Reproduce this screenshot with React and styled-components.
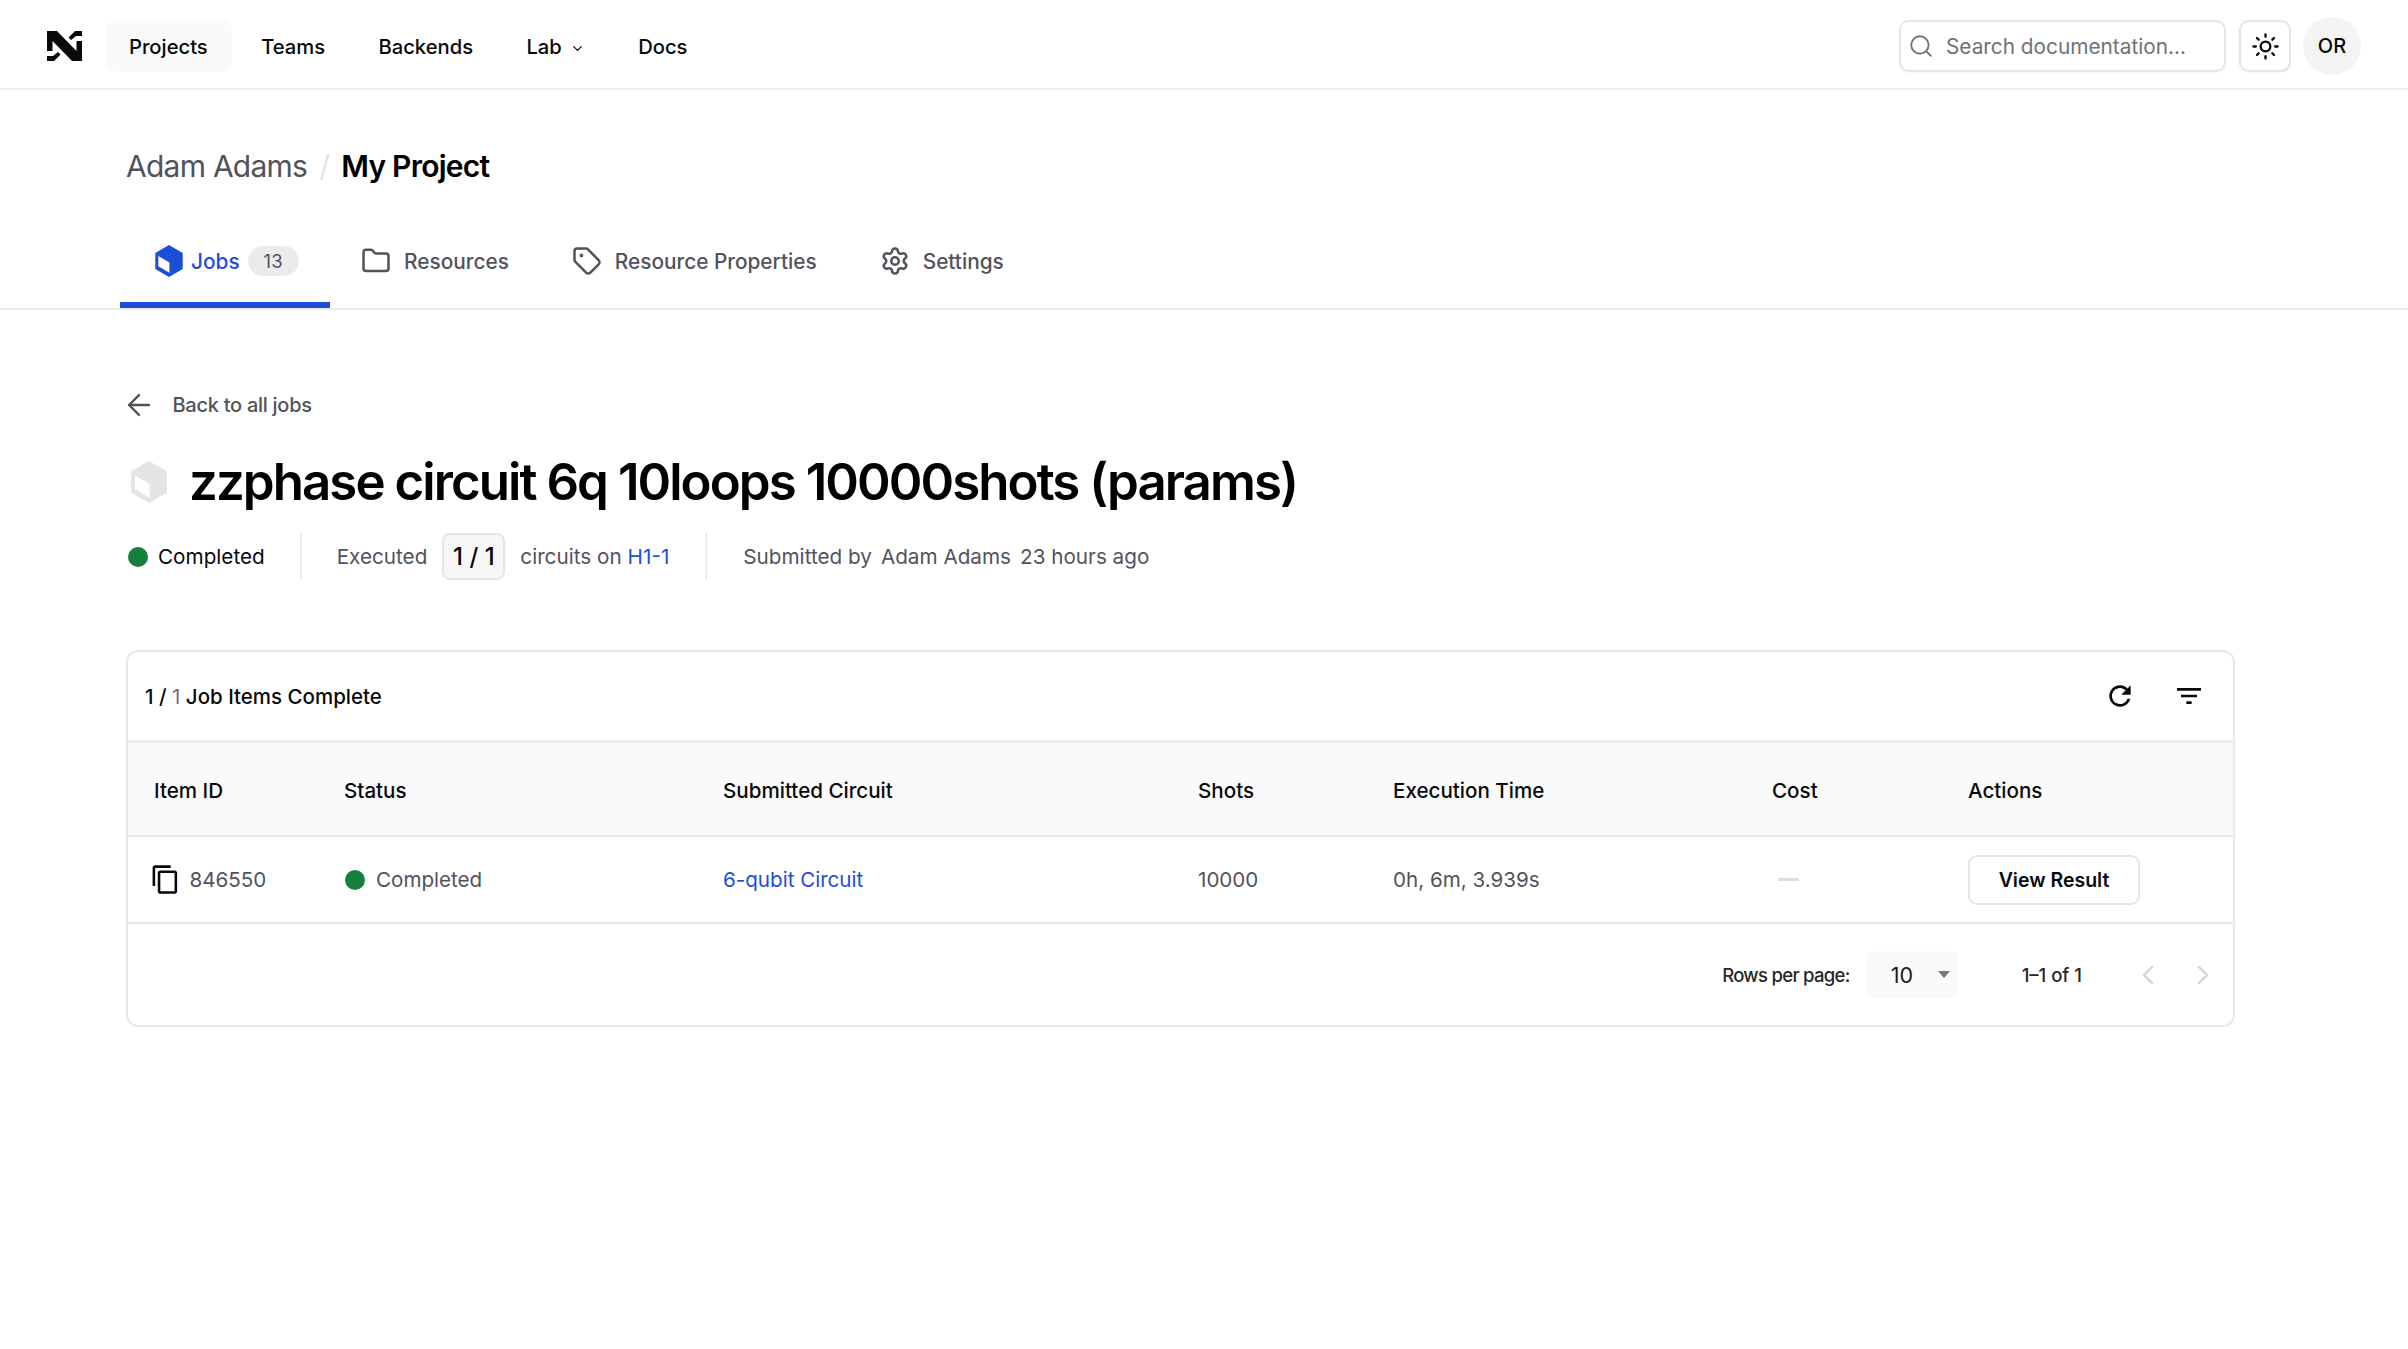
import React from "react";
import styled, { createGlobalStyle } from "styled-components";
import { Search, Sun, ChevronDown, ChevronLeft, ChevronRight, Folder, Tag, Settings, ArrowLeft } from "lucide-react";

const Global = createGlobalStyle`
  html, body { margin: 0; padding: 0; background: #fff; }
  body { font-family: Inter, "Noto Sans", sans-serif; color: #09090b; font-size: 20.7px; -webkit-font-smoothing: antialiased; }
  * { box-sizing: border-box; }
`;

const Page = styled.div`
  width: 2408px;
  min-height: 1349px;
  background: #fff;
`;
const TopBar = styled.header`
  height: 90px;
  display: flex;
  align-items: center;
  padding: 4px 47px 0;
  border-bottom: 2px solid #ececec;
`;
const Logo = styled.svg`
  width: 35px;
  height: 30px;
  margin-right: 23px;
  flex: none;
`;
const NavItem = styled.a`
  height: 52px;
  display: flex;
  align-items: center;
  padding: 0 24px;
  border-radius: 10px;
  margin-right: 5.4px;
  font-size: 20.2px;
  font-weight: 500;
  background: ${(p) => (p.$active ? "#fafafa" : "transparent")};
`;
const Chev = styled(ChevronDown)`
  margin-left: 8px;
  margin-top: 4px;
`;
const Right = styled.div`
  margin-left: auto;
  display: flex;
  align-items: center;
`;
const SearchBox = styled.div`
  width: 327px;
  height: 52px;
  display: flex;
  align-items: center;
  gap: 12px;
  padding: 0 7px;
  border: 2px solid #e5e5e5;
  border-radius: 10px;
  color: #71717a;
  font-size: 20.8px;
  box-shadow: 0 1px 2px rgba(0, 0, 0, 0.04);
`;
const ThemeButton = styled.button`
  width: 52px;
  height: 52px;
  margin-left: 13px;
  display: flex;
  align-items: center;
  justify-content: center;
  padding: 0;
  background: #fff;
  border: 2px solid #e5e5e5;
  border-radius: 10px;
  color: #09090b;
  box-shadow: 0 1px 2px rgba(0, 0, 0, 0.04);
`;
const Avatar = styled.div`
  width: 58px;
  height: 58px;
  margin-left: 12px;
  border-radius: 50%;
  background: #f4f4f5;
  display: flex;
  align-items: center;
  justify-content: center;
  font-size: 20px;
  font-weight: 500;
`;
const Crumbs = styled.div`
  padding: 56px 0 0 126px;
  height: 132px;
  display: flex;
  align-items: flex-start;
  font-size: 30px;
  line-height: 40px;
  letter-spacing: -0.025em;
`;
const CrumbMuted = styled.span`
  color: #52525b;
`;
const CrumbSep = styled.span`
  color: #e4e4e7;
  margin: 0 12px;
`;
const CrumbStrong = styled.span`
  font-weight: 600;
  color: #000;
`;
const Tabs = styled.nav`
  display: flex;
  padding-left: 120px;
  border-bottom: 2px solid #ebebeb;
`;
const TabItem = styled.a`
  height: 86px;
  display: flex;
  align-items: center;
  gap: 13px;
  padding: 0 31.5px 8px 31.5px;
  font-size: 20.8px;
  font-weight: 500;
  color: ${(p) => (p.$active ? "#1d4ed8" : "#52525b")};
  box-shadow: ${(p) => (p.$active ? "inset 0 -6px 0 #1d4ed8" : "none")};
`;
const JobsTab = styled(TabItem)`
  padding-left: 35px;
  padding-right: 31px;
  gap: 8px;
`;
const Badge = styled.span`
  width: 51px;
  height: 30px;
  border-radius: 15px;
  background: #ebebeb;
  color: #52525b;
  font-size: 18.5px;
  font-weight: 400;
  display: flex;
  align-items: center;
  justify-content: center;
`;
const Main = styled.main`
  padding: 80px 173px 0 126px;
`;
const Back = styled.a`
  height: 30px;
  display: flex;
  align-items: center;
  gap: 17px;
  font-size: 20px;
  font-weight: 500;
  letter-spacing: -0.27px;
  color: #52525b;
`;
const BackArrow = styled(ArrowLeft)`
  margin-left: -4.5px;
`;
const TitleRow = styled.div`
  margin-top: 30px;
  height: 64px;
  display: flex;
  align-items: center;
  gap: 22px;
  padding-left: 5px;
`;
const Title = styled.h1`
  margin: 0;
  font-size: 51px;
  line-height: 64px;
  font-weight: 600;
  letter-spacing: -0.038em;
  white-space: nowrap;
  color: #000;
`;
const MetaRow = styled.div`
  margin-top: 19px;
  height: 47px;
  display: flex;
  align-items: center;
  color: #52525b;
  font-size: 20.7px;
`;
const Dot = styled.span`
  width: 20px;
  height: 20px;
  border-radius: 50%;
  background: #15803d;
  flex: none;
`;
const StatusLabel = styled.span`
  margin-left: ${(p) => p.$gap}px;
  color: ${(p) => (p.$dark ? "#09090b" : "#52525b")};
`;
const Divider = styled.span`
  width: 2px;
  height: 47px;
  background: #ececec;
  margin: 0 ${(p) => p.$right}px 0 ${(p) => p.$left}px;
`;
const Ratio = styled.span`
  width: 63px;
  height: 47px;
  margin: 0 15px;
  border: 2px solid #e5e5e5;
  border-radius: 8px;
  background: #f7f7f7;
  color: #09090b;
  font-size: 24px;
  font-weight: 500;
  display: flex;
  align-items: center;
  justify-content: center;
`;
const Link = styled.a`
  color: #1d4ed8;
  margin-left: ${(p) => p.$left || 0}px;
`;
const Plain = styled.span`
  margin-left: ${(p) => p.$left || 0}px;
`;
const Card = styled.section`
  margin-top: 70px;
  height: 377px;
  border: 2px solid #e8e8e8;
  border-radius: 12px;
  overflow: hidden;
`;
const CardHead = styled.div`
  height: 91px;
  display: flex;
  align-items: center;
  padding: 0 28px 0 17px;
  border-bottom: 3px solid #ececec;
  font-size: 20.5px;
  font-weight: 500;
`;
const Faint = styled.span`
  color: #71717a;
  font-weight: 400;
`;
const HeadActions = styled.div`
  margin-left: auto;
  display: flex;
  gap: 37px;
  color: #09090b;
`;
const Row = styled.div`
  display: grid;
  grid-template-columns: 190px 379px 475px 195px 379px 196px 1fr;
  align-items: center;
  padding-left: 26px;
  padding-top: ${(p) => (p.$head ? 2 : 0)}px;
  height: ${(p) => p.$h}px;
  border-bottom: 2px solid #e8e8e8;
  background: ${(p) => (p.$head ? "#fafafa" : "#fff")};
  font-size: 20.6px;
  font-weight: ${(p) => (p.$head ? 500 : 400)};
  color: ${(p) => (p.$head ? "#09090b" : "#52525b")};
`;
const Cell = styled.div`
  display: flex;
  align-items: center;
`;
const CopyIcon = styled.svg`
  width: 31px;
  height: 31px;
  margin-left: -4.5px;
  margin-right: 9px;
  color: #09090b;
`;
const Dash = styled.span`
  width: 21px;
  height: 3px;
  margin-left: 6px;
  background: #dedede;
`;
const ViewButton = styled.button`
  width: 172px;
  height: 50px;
  background: #fff;
  border: 2px solid #e5e5e5;
  border-radius: 9px;
  color: #09090b;
  font: 600 19.5px Inter, sans-serif;
  padding: 0;
`;
const Foot = styled.div`
  height: 101px;
  display: flex;
  align-items: center;
  justify-content: flex-end;
  padding-right: 14px;
  font-size: 18.5px;
  font-weight: 500;
  color: #27272a;
`;
const RowsLabel = styled.span`
  letter-spacing: -0.7px;
`;
const Select = styled.div`
  width: 93px;
  height: 47px;
  margin: 0 63px 0 16px;
  padding: 0 9px 0 25px;
  display: flex;
  align-items: center;
  justify-content: space-between;
  background: #fafafa;
  border-radius: 8px;
  font-size: 21.5px;
  font-weight: 400;
  color: #18181b;
`;
const Caret = styled.span`
  width: 0;
  height: 0;
  border-left: 6.5px solid transparent;
  border-right: 6.5px solid transparent;
  border-top: 7px solid #757575;
`;
const PageNav = styled.div`
  margin-left: 50px;
  display: flex;
  gap: 23px;
  color: #d4d4d4;
`;

const Box = ({ fill, size }) => (
  <svg width={size[0]} height={size[1]} viewBox="0 0 36 42" style={{ flex: "none" }}>
    <path fill={fill} d="M18 0 36 10.5v21L18 42 0 31.5v-21Z" />
    <path fill="#fff" d="M4 14.5 18.5 23v13.5L4 28Z" />
  </svg>
);

const Refresh = () => (
  <svg width="32" height="32" viewBox="0 0 24 24" fill="currentColor">
    <path d="M17.65 6.35C16.2 4.9 14.21 4 12 4c-4.42 0-7.99 3.58-7.99 8s3.57 8 7.99 8c3.73 0 6.84-2.55 7.73-6h-2.08c-.82 2.33-3.04 4-5.65 4-3.31 0-6-2.69-6-6s2.69-6 6-6c1.66 0 3.14.69 4.22 1.78L13 11h7V4l-2.35 2.35z" />
  </svg>
);
const Filter = () => (
  <svg width="32" height="32" viewBox="0 0 24 24" fill="currentColor">
    <path d="M10 18h4v-2h-4v2zM3 6v2h18V6H3zm3 7h12v-2H6v2z" />
  </svg>
);

const cols = ["Item ID", "Status", "Submitted Circuit", "Shots", "Execution Time", "Cost", "Actions"];

export default function App() {
  return (
    <Page>
      <Global />
      <TopBar>
        <Logo viewBox="0 0 35 30" fill="#09090b">
          <path d="M0 0h10l19.5 20V10H35v20H25L5.5 10v10H0Z" />
          <path d="M35 0v5h-6l-5 4-2.5-2.5L28 0Z" />
          <path d="M0 30v-5h6l5-4 2.5 2.5L7 30Z" />
        </Logo>
        <NavItem $active>Projects</NavItem>
        <NavItem>Teams</NavItem>
        <NavItem>Backends</NavItem>
        <NavItem>Lab<Chev size={15} strokeWidth={2} /></NavItem>
        <NavItem>Docs</NavItem>
        <Right>
          <SearchBox><Search size={26} strokeWidth={1.7} />Search documentation...</SearchBox>
          <ThemeButton><Sun size={29} strokeWidth={1.9} /></ThemeButton>
          <Avatar>OR</Avatar>
        </Right>
      </TopBar>
      <Crumbs>
        <CrumbMuted>Adam Adams</CrumbMuted>
        <CrumbSep>/</CrumbSep>
        <CrumbStrong>My Project</CrumbStrong>
      </Crumbs>
      <Tabs>
        <JobsTab $active><Box fill="#1d4ed8" size={[28, 32]} />Jobs<Badge>13</Badge></JobsTab>
        <TabItem><Folder size={30} strokeWidth={2} />Resources</TabItem>
        <TabItem><Tag size={30} strokeWidth={2} />Resource Properties</TabItem>
        <TabItem><Settings size={30} strokeWidth={2} />Settings</TabItem>
      </Tabs>
      <Main>
        <Back><BackArrow size={34} strokeWidth={1.7} />Back to all jobs</Back>
        <TitleRow>
          <Box fill="#e4e4e7" size={[36, 42]} />
          <Title>zzphase circuit 6q 10loops 10000shots (params)</Title>
        </TitleRow>
        <MetaRow>
          <Plain $left={2} />
          <Dot />
          <StatusLabel $gap={10} $dark>Completed</StatusLabel>
          <Divider $left={35} $right={35} />
          <span>Executed</span>
          <Ratio>1 / 1</Ratio>
          <span>circuits on</span>
          <Link $left={6}>H1-1</Link>
          <Divider $left={36} $right={36} />
          <span>Submitted by</span>
          <Plain $left={9}>Adam Adams</Plain>
          <Plain $left={9}>23 hours ago</Plain>
        </MetaRow>
        <Card>
          <CardHead>
            <span>1 / <Faint>1</Faint> Job Items Complete</span>
            <HeadActions><Refresh /><Filter /></HeadActions>
          </CardHead>
          <Row $head $h={94}>
            {cols.map((c) => <Cell key={c}>{c}</Cell>)}
          </Row>
          <Row $h={87}>
            <Cell>
              <CopyIcon viewBox="0 0 24 24" fill="currentColor">
                <path d="M16 1H4c-1.1 0-2 .9-2 2v14h2V3h12V1zm3 4H8c-1.1 0-2 .9-2 2v14c0 1.1.9 2 2 2h11c1.1 0 2-.9 2-2V7c0-1.1-.9-2-2-2zm0 16H8V7h11v14z" />
              </CopyIcon>
              846550
            </Cell>
            <Cell><Plain $left={1} /><Dot /><StatusLabel $gap={11}>Completed</StatusLabel></Cell>
            <Cell><Link>6-qubit Circuit</Link></Cell>
            <Cell>10000</Cell>
            <Cell>0h, 6m, 3.939s</Cell>
            <Cell><Dash /></Cell>
            <Cell><ViewButton>View Result</ViewButton></Cell>
          </Row>
          <Foot>
            <RowsLabel>Rows per page:</RowsLabel>
            <Select>10<Caret /></Select>
            <span>1–1 of 1</span>
            <PageNav><ChevronLeft size={32} strokeWidth={1.8} /><ChevronRight size={32} strokeWidth={1.8} /></PageNav>
          </Foot>
        </Card>
      </Main>
    </Page>
  );
}
